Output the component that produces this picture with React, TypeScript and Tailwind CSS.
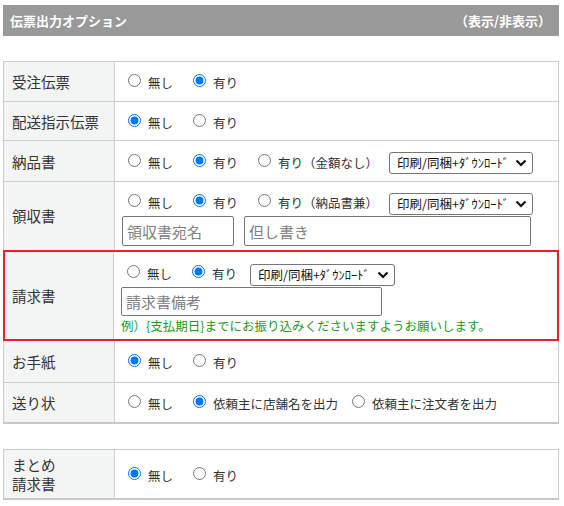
import React from "react";

function Opt({
  name,
  label,
  checked,
  className = "",
}: {
  name: string;
  label: string;
  checked?: boolean;
  className?: string;
}) {
  return (
    <label className={`flex shrink-0 items-center ${className}`}>
      <input
        type="radio"
        name={name}
        defaultChecked={checked}
        className="m-0 mb-[2px] h-[13px] w-[13px]"
      />
      <span className="ml-[7px] mt-[4px] whitespace-nowrap">{label}</span>
    </label>
  );
}

function Sel({ className = "" }: { className?: string }) {
  return (
    <div
      className={`flex h-[22px] shrink-0 items-center justify-between rounded-[3px] border border-[#767676] bg-white pl-[7px] pr-[5px] text-[12.5px] text-[#111] ${className}`}
    >
      <span className="whitespace-nowrap">印刷/同梱+ﾀﾞｳﾝﾛｰﾄﾞ</span>
      <svg width="12" height="8" viewBox="0 0 12 8">
        <path d="M1.5 1.5 L6 6 L10.5 1.5" stroke="#111" strokeWidth="2.2" fill="none" />
      </svg>
    </div>
  );
}

function Row({
  label,
  h,
  top = true,
  children,
}: {
  label: React.ReactNode;
  h: string;
  top?: boolean;
  children: React.ReactNode;
}) {
  return (
    <div className={`flex border-x border-[#ccc] ${top ? "border-t" : ""} ${h}`}>
      <div className="flex w-[111px] shrink-0 items-center border-r border-[#ccc] bg-[#f3f4f4] pl-[8px] text-[14.5px] leading-[19px] text-[#333]">
        {label}
      </div>
      <div className="flex flex-1 items-center pl-[13px]">{children}</div>
    </div>
  );
}

export default function App() {
  return (
    <div className="min-h-screen bg-white px-[3px] pt-[5px] font-['Noto_Sans_CJK_JP',sans-serif] text-[12.5px] text-[#333]">
      {/* header */}
      <div className="flex h-[31px] w-[556px] items-center justify-between bg-[#999] pl-[7px] pr-[8px] text-[13px] font-bold text-white">
        <span>伝票出力オプション</span>
        <span>（表示/非表示）</span>
      </div>

      {/* main table */}
      <div className="mt-[25px] w-[556px] border-b-2 border-[#c8c8c8]">
        <Row label="受注伝票" h="h-[40px]">
          <Opt name="r1" label="無し" />
          <Opt name="r1" label="有り" checked className="ml-[20px]" />
        </Row>
        <Row label="配送指示伝票" h="h-[39px]">
          <Opt name="r2" label="無し" checked />
          <Opt name="r2" label="有り" className="ml-[20px]" />
        </Row>
        <Row label="納品書" h="h-[41px]">
          <Opt name="r3" label="無し" />
          <Opt name="r3" label="有り" checked className="ml-[20px]" />
          <Opt name="r3" label="有り（金額なし）" className="ml-[20px]" />
          <Sel className="ml-[11px] mt-[4px] w-[144px]" />
        </Row>

        {/* 領収書 */}
        <div className="flex h-[69px] border-x border-t border-[#ccc]">
          <div className="flex w-[111px] shrink-0 items-center border-r border-[#ccc] bg-[#f3f4f4] pl-[8px] text-[14.5px] text-[#333]">
            領収書
          </div>
          <div className="flex flex-1 flex-col pl-[7px] pt-[11px]">
            <div className="flex h-[22px] items-center pl-[6px]">
              <Opt name="r4" label="無し" className="mb-[5px]" />
              <Opt name="r4" label="有り" checked className="mb-[5px] ml-[20px]" />
              <Opt name="r4" label="有り（納品書兼）" className="mb-[5px] ml-[20px]" />
              <Sel className="ml-[11px] w-[144px]" />
            </div>
            <div className="mt-[1px] flex gap-[10px]">
              <input
                placeholder="領収書宛名"
                className="h-[30px] w-[112px] rounded-[2px] border border-[#767676] px-[4px] text-[15px] outline-none placeholder:text-[#808080]"
              />
              <input
                placeholder="但し書き"
                className="h-[30px] w-[287px] rounded-[2px] border border-[#767676] px-[4px] text-[15px] outline-none placeholder:text-[#808080]"
              />
            </div>
          </div>
        </div>

        {/* 請求書 (highlighted) */}
        <div className="flex h-[91px] border-2 border-[#e8202a]">
          <div className="flex w-[109px] shrink-0 items-center border-r border-[#ccc] bg-[#f3f4f4] pl-[7px] text-[14.5px] text-[#333]">
            請求書
          </div>
          <div className="flex flex-1 flex-col pl-[7px] pt-[12px]">
            <div className="flex h-[22px] items-center pl-[6px]">
              <Opt name="r5" label="無し" className="mb-[5px]" />
              <Opt name="r5" label="有り" checked className="mb-[5px] ml-[20px]" />
              <Sel className="ml-[13px] w-[145px]" />
            </div>
            <input
              placeholder="請求書備考"
              className="mt-[1px] h-[29px] w-[261px] rounded-[2px] border border-[#767676] px-[4px] text-[15px] outline-none placeholder:text-[#808080]"
            />
            <div className="mt-[1px] whitespace-nowrap text-[12.5px] leading-[17px] text-[#229922]">
              例）{"{"}支払期日{"}"}までにお振り込みくださいますようお願いします。
            </div>
          </div>
        </div>

        <Row label="お手紙" h="h-[41px]" top={false}>
          <Opt name="r6" label="無し" checked />
          <Opt name="r6" label="有り" className="ml-[20px]" />
        </Row>
        <Row label="送り状" h="h-[40px]">
          <Opt name="r7" label="無し" />
          <Opt name="r7" label="依頼主に店舗名を出力" checked className="ml-[20px]" />
          <Opt name="r7" label="依頼主に注文者を出力" className="ml-[14px]" />
        </Row>
      </div>

      {/* second table */}
      <div className="mt-[25px] w-[556px] border-b-2 border-[#c8c8c8]">
        <Row
          label={
            <span>
              まとめ
              <br />
              請求書
            </span>
          }
          h="h-[49px]"
        >
          <Opt name="r8" label="無し" checked />
          <Opt name="r8" label="有り" className="ml-[20px]" />
        </Row>
      </div>
    </div>
  );
}
